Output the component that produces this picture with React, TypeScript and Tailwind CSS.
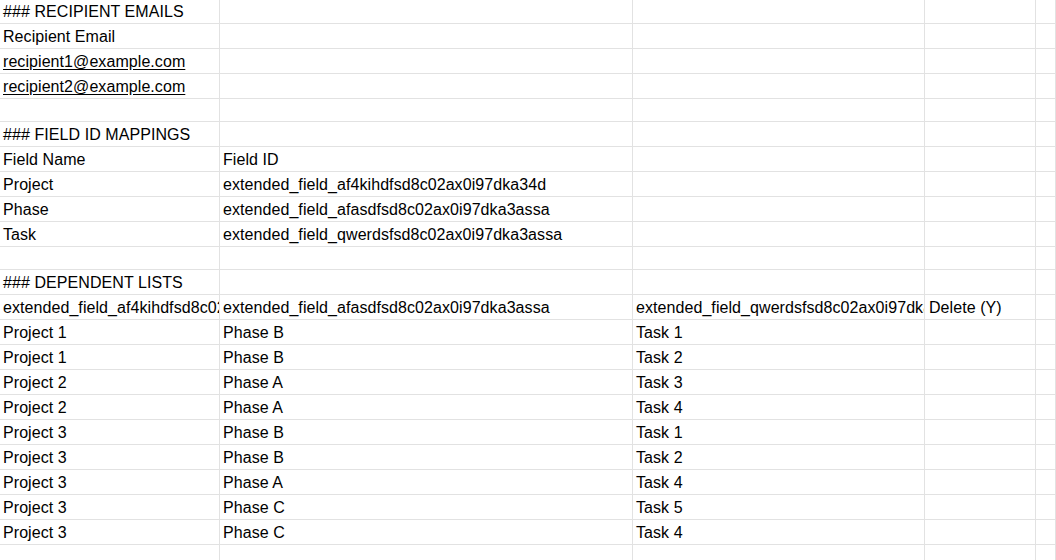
import React from "react";

type Row = { h: string; cells: string[]; link?: boolean };

const rows: Row[] = [
  { h: "h-[24px]", cells: ["### RECIPIENT EMAILS"] },
  { h: "h-[25px]", cells: ["Recipient Email"] },
  { h: "h-[25px]", cells: ["recipient1@example.com"], link: true },
  { h: "h-[25px]", cells: ["recipient2@example.com"], link: true },
  { h: "h-[23px]", cells: [] },
  { h: "h-[25px]", cells: ["### FIELD ID MAPPINGS"] },
  { h: "h-[25px]", cells: ["Field Name", "Field ID"] },
  { h: "h-[25px]", cells: ["Project", "extended_field_af4kihdfsd8c02ax0i97dka34d"] },
  { h: "h-[25px]", cells: ["Phase", "extended_field_afasdfsd8c02ax0i97dka3assa"] },
  { h: "h-[25px]", cells: ["Task", "extended_field_qwerdsfsd8c02ax0i97dka3assa"] },
  { h: "h-[23px]", cells: [] },
  { h: "h-[25px]", cells: ["### DEPENDENT LISTS"] },
  {
    h: "h-[25px]",
    cells: [
      "extended_field_af4kihdfsd8c02ax0i97dka34d",
      "extended_field_afasdfsd8c02ax0i97dka3assa",
      "extended_field_qwerdsfsd8c02ax0i97dka3assa",
      "Delete (Y)",
    ],
  },
  { h: "h-[25px]", cells: ["Project 1", "Phase B", "Task 1"] },
  { h: "h-[25px]", cells: ["Project 1", "Phase B", "Task 2"] },
  { h: "h-[25px]", cells: ["Project 2", "Phase A", "Task 3"] },
  { h: "h-[25px]", cells: ["Project 2", "Phase A", "Task 4"] },
  { h: "h-[25px]", cells: ["Project 3", "Phase B", "Task 1"] },
  { h: "h-[25px]", cells: ["Project 3", "Phase B", "Task 2"] },
  { h: "h-[25px]", cells: ["Project 3", "Phase A", "Task 4"] },
  { h: "h-[25px]", cells: ["Project 3", "Phase C", "Task 5"] },
  { h: "h-[25px]", cells: ["Project 3", "Phase C", "Task 4"] },
  { h: "h-[25px]", cells: [] },
];

const pads = ["pl-[3px]", "pl-[3px]", "pl-[3px]", "pl-[4px]", "pl-[3px]"];

export default function App() {
  return (
    <div className="h-[560px] w-[1056px] overflow-hidden bg-white text-[16px] leading-[18px] tracking-[0.07px] text-black font-['Liberation_Sans',Arial,sans-serif]">
      {rows.map((row, i) => (
        <div
          key={i}
          className={`grid grid-cols-[220px_413px_292px_111px_1fr] ${row.h}`}
        >
          {[0, 1, 2, 3, 4].map((c) => (
            <div
              key={c}
              className={`flex items-end overflow-hidden whitespace-nowrap border-r border-b border-[#e2e2e2] pb-[2px] ${pads[c]}`}
            >
              {row.cells[c] ? (
                <span className={row.link ? "underline underline-offset-2" : ""}>
                  {row.cells[c]}
                </span>
              ) : null}
            </div>
          ))}
        </div>
      ))}
    </div>
  );
}
